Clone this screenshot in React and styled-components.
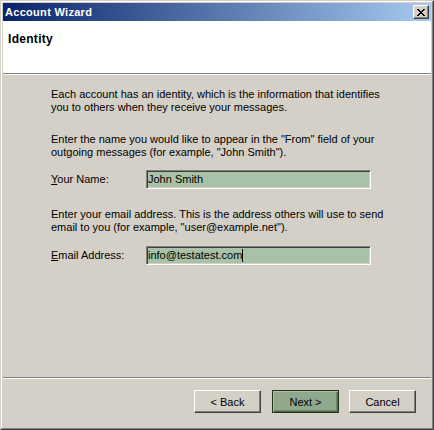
import React from "react";
import styled, { createGlobalStyle } from "styled-components";

const Global = createGlobalStyle`
  html, body { margin: 0; padding: 0; background: #d4d0c8; }
  body { font-family: "Liberation Sans", Arial, sans-serif; }
  * { box-sizing: border-box; }
`;

const Window = styled.div`
  width: 434px;
  height: 430px;
  border: 1px solid;
  border-color: #d4d0c8 #404040 #404040 #d4d0c8;
  background: #d4d0c8;
`;

const Frame = styled.div`
  height: 100%;
  border: 1px solid;
  border-color: #ffffff #808080 #808080 #ffffff;
  padding: 1px;
  display: flex;
  flex-direction: column;
`;

const TitleBar = styled.div`
  height: 18px;
  flex: none;
  display: flex;
  align-items: center;
  justify-content: space-between;
  padding: 0 2px 0 2px;
  background: linear-gradient(to right, #0a246a, #a6caf0);
`;

const TitleText = styled.span`
  color: #ffffff;
  font-weight: bold;
  font-size: 11px;
  letter-spacing: 0.3px;
  line-height: 13px;
`;

const CloseButton = styled.button`
  width: 16px;
  height: 14px;
  padding: 0;
  margin: 0;
  display: flex;
  align-items: center;
  justify-content: center;
  background: #d4d0c8;
  border: 1px solid;
  border-color: #ffffff #404040 #404040 #ffffff;
  box-shadow: inset -1px -1px #808080;
`;

const Header = styled.div`
  height: 53px;
  flex: none;
  background: #ffffff;
  padding: 12px 0 0 5px;
  border-bottom: 1px solid #808080;
  box-shadow: 0 1px 0 #ffffff;
  margin-bottom: 1px;
`;

const HeaderTitle = styled.div`
  font-weight: bold;
  font-size: 12px;
  letter-spacing: 0.3px;
  line-height: 13px;
  color: #000;
`;

const Content = styled.div`
  flex: 1;
  display: flex;
  flex-direction: column;
  padding: 13px 0 0 48px;
  font-size: 11px;
  line-height: 13px;
  color: #000;
  border-bottom: 1px solid #808080;
  box-shadow: 0 1px 0 #ffffff;
`;

const Paragraph = styled.div`
  white-space: nowrap;
  margin-top: ${(p) => p.$gap || 0}px;
`;

const Line = styled.div``;

const FieldRow = styled.div`
  display: flex;
  align-items: center;
  margin-top: ${(p) => p.$gap || 0}px;
`;

const Label = styled.span`
  width: 95px;
  flex: none;
`;

const Mnemonic = styled.span`
  text-decoration: underline;
`;

const Field = styled.div`
  width: 225px;
  height: 19px;
  display: flex;
  align-items: center;
  padding-left: 1px;
  background: #a9c1a7;
  border: 1px solid;
  border-color: #808080 #ffffff #ffffff #808080;
  box-shadow: inset 1px 1px #404040, inset -1px -1px #d4d0c8;
  font-size: 11px;
  color: #000;
`;

const Caret = styled.span`
  display: inline-block;
  width: 1px;
  height: 13px;
  background: #000;
`;

const Footer = styled.div`
  height: 48px;
  flex: none;
  margin-top: 1px;
  display: flex;
  justify-content: flex-end;
  align-items: flex-start;
  padding: 11px 15px 0 0;
`;

const Button = styled.button`
  width: 67px;
  height: 23px;
  margin: 0 0 0 ${(p) => p.$gap || 0}px;
  padding: 0;
  font-family: "Liberation Sans", Arial, sans-serif;
  font-size: 11px;
  color: #000;
  background: ${(p) => (p.$primary ? "#8fa88b" : "#d4d0c8")};
  border: 1px solid;
  border-color: ${(p) =>
    p.$primary ? "#26331f" : "#ffffff #404040 #404040 #ffffff"};
  box-shadow: ${(p) =>
    p.$primary
      ? "inset 1px 1px #a9bfa5, inset -1px -1px #4d6549, inset -2px -2px #70896c"
      : "inset -1px -1px #808080"};
`;

export default function App() {
  return (
    <>
      <Global />
      <Window>
        <Frame>
          <TitleBar>
            <TitleText>Account Wizard</TitleText>
            <CloseButton aria-label="Close">
              <svg width="8" height="7" viewBox="0 0 8 7">
                <path
                  d="M0 0h2v1h1v1h2V1h1V0h2v1H7v1H6v1H5v1h1v1h1v1h1v1H6V6H5V5H3v1H2v1H0V6h1V5h1V4h1V3H2V2H1V1H0z"
                  fill="#000"
                />
              </svg>
            </CloseButton>
          </TitleBar>
          <Header>
            <HeaderTitle>Identity</HeaderTitle>
          </Header>
          <Content>
            <Paragraph>
              <Line>Each account has an identity, which is the information that identifies</Line>
              <Line>you to others when they receive your messages.</Line>
            </Paragraph>
            <Paragraph $gap={19}>
              <Line>Enter the name you would like to appear in the "From" field of your</Line>
              <Line>outgoing messages (for example, "John Smith").</Line>
            </Paragraph>
            <FieldRow $gap={11}>
              <Label>
                <Mnemonic>Y</Mnemonic>our Name:
              </Label>
              <Field>John Smith</Field>
            </FieldRow>
            <Paragraph $gap={19}>
              <Line>Enter your email address. This is the address others will use to send</Line>
              <Line>email to you (for example, "user@example.net").</Line>
            </Paragraph>
            <FieldRow $gap={12}>
              <Label>
                <Mnemonic>E</Mnemonic>mail Address:
              </Label>
              <Field>
                info@testatest.com
                <Caret />
              </Field>
            </FieldRow>
          </Content>
          <Footer>
            <Button>&lt; Back</Button>
            <Button $primary $gap={11}>Next &gt;</Button>
            <Button $gap={10}>Cancel</Button>
          </Footer>
        </Frame>
      </Window>
    </>
  );
}
